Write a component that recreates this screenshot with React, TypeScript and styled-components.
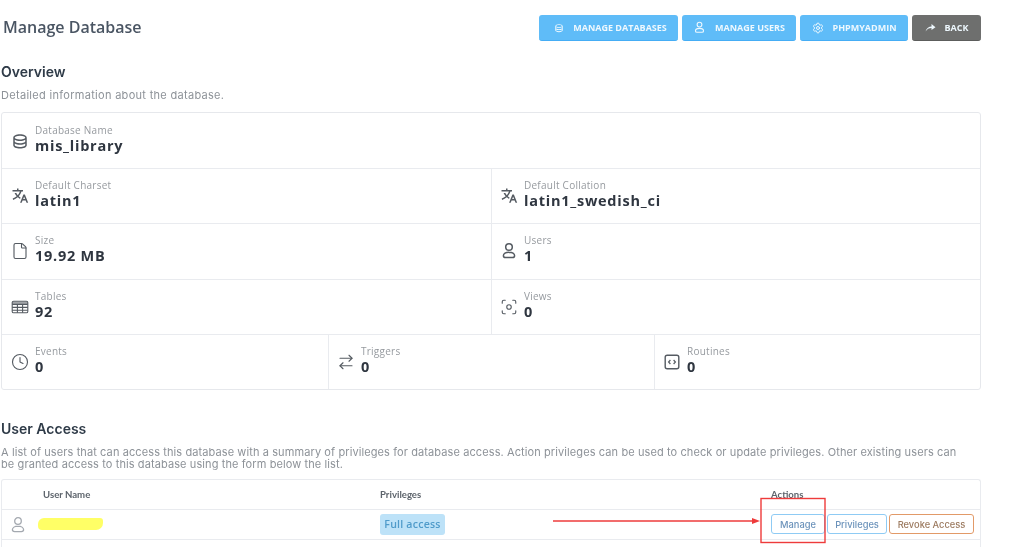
import React from "react";
import styled, { createGlobalStyle } from "styled-components";
import { Settings, File, Clock, ArrowRightLeft, Focus } from "lucide-react";
import { RiDatabase2Line, RiTranslate2 } from "react-icons/ri";

const Global = createGlobalStyle`
  html, body { margin: 0; padding: 0; background: #fff; overflow: hidden; }
  * { box-sizing: border-box; }
`;

const Page = styled.div`
  position: relative;
  width: 1024px;
  height: 547px;
  overflow: hidden;
  padding: 0 43px 0 1px;
  font-family: "Open Sans", sans-serif;
  filter: blur(0.45px);
`;

const Header = styled.header`
  display: flex;
  justify-content: space-between;
  align-items: center;
  height: 56px;
`;

const Title = styled.h1`
  margin: 0 0 2px 2px;
  font-size: 16px;
  font-weight: 600;
  color: #4a5563;
`;

const Toolbar = styled.div`
  display: flex;
  gap: 4px;
`;

const ToolButton = styled.button<{ $w: number; $dark?: boolean; $inset?: number }>`
  width: ${(p) => p.$w}px;
  height: 26px;
  display: flex;
  align-items: center;
  justify-content: center;
  gap: 9px;
  padding: 0 0 0 ${(p) => p.$inset ?? 0}px;
  border: 0;
  border-bottom: 1px solid ${(p) => (p.$dark ? "#5c5d5c" : "#45adf5")};
  border-radius: 3px;
  background: ${(p) => (p.$dark ? "#6e6f6e" : "#5fbcf8")};
  color: #eef8fe;
  font-family: "Open Sans", sans-serif;
  font-size: 9px;
  font-weight: 700;
`;

const SectionTitle = styled.h2<{ $top: number }>`
  margin: ${(p) => p.$top}px 0 0;
  font-family: Inter, sans-serif;
  font-size: 14px;
  line-height: 18px;
  font-weight: 600;
  color: #2f3b48;
`;

const Description = styled.p<{ $tracking: number }>`
  margin: 8px 0 0;
  max-width: 962px;
  font-family: Inter, sans-serif;
  font-size: 11px;
  line-height: 12px;
  letter-spacing: ${(p) => p.$tracking}px;
  color: #8d9298;
`;

const Card = styled.section`
  margin-top: 11px;
  height: 278px;
  border: 1px solid #e6e8ec;
  border-radius: 3px;
  display: grid;
  grid-template-rows: repeat(5, 1fr);
`;

const StatRow = styled.div<{ $cols: number }>`
  display: grid;
  grid-template-columns: repeat(${(p) => p.$cols}, 1fr);
  & + & { border-top: 1px solid #e9ebef; }
`;

const Stat = styled.div`
  display: flex;
  align-items: center;
  gap: 6px;
  padding-left: 9px;
  color: #555b62;
  & + & { border-left: 1px solid #e9ebef; padding-left: 8px; }
`;

const StatText = styled.div`
  display: flex;
  flex-direction: column;
  padding-bottom: 4px;
`;

const StatLabel = styled.span`
  font-size: 10px;
  line-height: 14px;
  letter-spacing: 0.25px;
  color: #969a9f;
`;

const StatValue = styled.span`
  font-size: 14.5px;
  line-height: 18px;
  font-weight: 700;
  letter-spacing: 0.75px;
  color: #2f3640;
`;

const UserTable = styled.section`
  margin-top: 9px;
  height: 90px;
  border: 1px solid #e9ebef;
  border-bottom: 0;
  border-radius: 3px 3px 0 0;
`;

const TableRow = styled.div<{ $h: number }>`
  display: grid;
  grid-template-columns: 378px 391px 1fr;
  align-items: center;
  height: ${(p) => p.$h}px;
  border-bottom: 1px solid #e9ebef;
`;

const HeadCell = styled.div<{ $pad?: number }>`
  padding-left: ${(p) => p.$pad ?? 0}px;
  font-family: Lato, sans-serif;
  font-size: 9.6px;
  font-weight: 700;
  color: #5d646c;
`;

const UserCell = styled.div`
  display: flex;
  align-items: center;
  gap: 11px;
  padding-left: 7px;
  color: #a4a9b0;
`;

const Redacted = styled.span`
  width: 65px;
  height: 12px;
  margin-bottom: 2px;
  border-radius: 6px 3px 7px 4px;
  background: #ffff66;
`;

const BadgeCell = styled.div`
  display: flex;
  margin-bottom: 1px;
`;

const Badge = styled.span`
  height: 21px;
  width: 65px;
  text-align: center;
  border-radius: 3px;
  background: #bde2f8;
  color: #4f9bca;
  font-size: 10.6px;
  line-height: 21px;
  font-weight: 600;
  letter-spacing: 0.2px;
`;

const Actions = styled.div`
  display: flex;
  gap: 2px;
  margin-bottom: 1px;
`;

const ActionButton = styled.button<{ $w: number; $danger?: boolean }>`
  width: ${(p) => p.$w}px;
  height: 20px;
  padding: 0;
  background: #fff;
  border: 1px solid ${(p) => (p.$danger ? "#e29a68" : "#8fcbf4")};
  border-radius: 3px;
  color: ${(p) => (p.$danger ? "#9c7a5f" : "#6c93bb")};
  font-family: Inter, sans-serif;
  font-size: 9.3px;
  font-weight: 500;
`;

const Annotation = styled.svg`
  position: absolute;
  left: 0;
  top: 0;
  width: 1024px;
  height: 547px;
  pointer-events: none;
`;

const UserIcon = ({ size = 18, sw = 1.5 }: { size?: number; sw?: number }) => (
  <svg width={size} height={size} viewBox="0 0 18 18" fill="none" stroke="currentColor" strokeWidth={sw}>
    <circle cx="9" cy="5" r="3.3" />
    <path d="M9 10.2c-3.3 0-5.6 1.6-5.6 3.6 0 1.3 1 1.8 2.2 1.8h6.8c1.2 0 2.2-.5 2.2-1.8 0-2-2.3-3.6-5.6-3.6Z" />
  </svg>
);

const TableIcon = () => (
  <svg width="18" height="18" viewBox="0 0 18 18" fill="none" stroke="currentColor" strokeWidth="1.1">
    <rect x="1.2" y="3.2" width="15.6" height="11.6" rx="1.4" />
    <path d="M1.2 3.8h15.6v2.6H1.2Z" fill="currentColor" fillOpacity="0.55" stroke="none" />
    <path d="M1.2 6.4h15.6M1.2 9.4h15.6M1.2 12.2h15.6M6.4 6.4v8.4M11.6 6.4v8.4" />
  </svg>
);

const CodeIcon = () => (
  <svg width="18" height="18" viewBox="0 0 18 18" fill="none" stroke="currentColor" strokeWidth="1.4">
    <rect x="2.2" y="2.2" width="13.6" height="13.6" rx="2" />
    <path d="M7.4 7 5.6 9l1.8 2M10.6 7l1.8 2-1.8 2" strokeWidth="1.2" />
  </svg>
);

const BackIcon = () => (
  <svg width="11" height="9" viewBox="0 0 11 9">
    <path d="M0.5 8.5C1.5 5 4 3.5 6.5 3.5V1L10.5 4.2 6.5 7V5C4 5 2 6 .5 8.5Z" fill="currentColor" />
  </svg>
);

type StatItem = { icon: React.ReactNode; label: string; value: string };

const ic = { size: 18, strokeWidth: 1.5 };
const TranslateIcon = () => <RiTranslate2 size={18} />;

const rows: StatItem[][] = [
  [{ icon: <RiDatabase2Line size={18} />, label: "Database Name", value: "mis_library" }],
  [
    { icon: <TranslateIcon />, label: "Default Charset", value: "latin1" },
    { icon: <TranslateIcon />, label: "Default Collation", value: "latin1_swedish_ci" },
  ],
  [
    { icon: <File {...ic} />, label: "Size", value: "19.92 MB" },
    { icon: <UserIcon />, label: "Users", value: "1" },
  ],
  [
    { icon: <TableIcon />, label: "Tables", value: "92" },
    { icon: <Focus {...ic} />, label: "Views", value: "0" },
  ],
  [
    { icon: <Clock {...ic} />, label: "Events", value: "0" },
    { icon: <ArrowRightLeft {...ic} />, label: "Triggers", value: "0" },
    { icon: <CodeIcon />, label: "Routines", value: "0" },
  ],
];

export default function App() {
  return (
    <Page>
      <Global />
      <Header>
        <Title>Manage Database</Title>
        <Toolbar>
          <ToolButton $w={139} $inset={4}><RiDatabase2Line size={10} />MANAGE DATABASES</ToolButton>
          <ToolButton $w={114}><UserIcon size={13} />MANAGE USERS</ToolButton>
          <ToolButton $w={108}><Settings size={12} />PHPMYADMIN</ToolButton>
          <ToolButton $w={69} $dark><BackIcon />BACK</ToolButton>
        </Toolbar>
      </Header>
      <SectionTitle $top={7}>Overview</SectionTitle>
      <Description $tracking={0.3}>Detailed information about the database.</Description>
      <Card>
        {rows.map((row, i) => (
          <StatRow key={i} $cols={row.length}>
            {row.map((s) => (
              <Stat key={s.label}>
                {s.icon}
                <StatText>
                  <StatLabel>{s.label}</StatLabel>
                  <StatValue>{s.value}</StatValue>
                </StatText>
              </Stat>
            ))}
          </StatRow>
        ))}
      </Card>
      <SectionTitle $top={30}>User Access</SectionTitle>
      <Description $tracking={0.1}>
        A list of users that can access this database with a summary of privileges for database access. Action privileges can be used to check or update privileges. Other existing users can be granted access to this database using the form below the list.
      </Description>
      <UserTable>
        <TableRow $h={30}>
          <HeadCell $pad={41}>User Name</HeadCell>
          <HeadCell>Privileges</HeadCell>
          <HeadCell>Actions</HeadCell>
        </TableRow>
        <TableRow $h={30}>
          <UserCell>
            <UserIcon sw={1.3} />
            <Redacted />
          </UserCell>
          <BadgeCell><Badge>Full access</Badge></BadgeCell>
          <Actions>
            <ActionButton $w={54}>Manage</ActionButton>
            <ActionButton $w={60}>Privileges</ActionButton>
            <ActionButton $w={85} $danger>Revoke Access</ActionButton>
          </Actions>
        </TableRow>
      </UserTable>
      <Annotation viewBox="0 0 1024 547">
        <rect x="761" y="498.5" width="64" height="44" fill="none" stroke="#ee3b3b" strokeWidth="1.4" />
        <path d="M553 521H754" stroke="#ee3b3b" strokeWidth="1.4" />
        <path d="M752 518L760 521L752 524Z" fill="#ee3b3b" />
      </Annotation>
    </Page>
  );
}
